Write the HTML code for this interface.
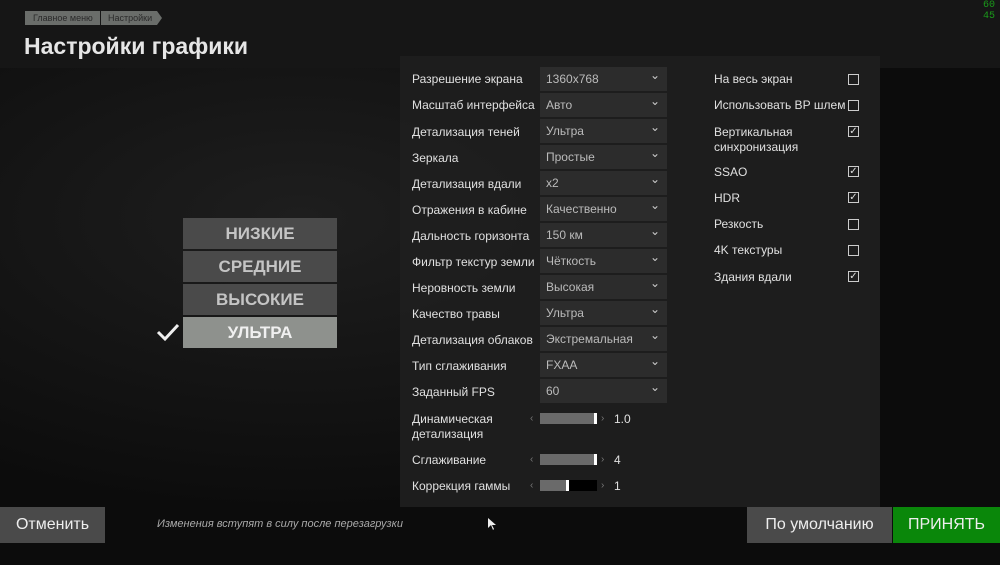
<!DOCTYPE html>
<html><head><meta charset="utf-8"><style>
*{margin:0;padding:0;box-sizing:border-box}
body{width:1000px;height:565px;overflow:hidden;background:#0c0c0c;font-family:"Liberation Sans","DejaVu Sans",sans-serif;color:#ddd;position:relative}
.abs{position:absolute}
.hdr{left:0;top:0;width:1000px;height:68px;background:#161616}
.bg{left:0;top:68px;width:1000px;height:497px;background:radial-gradient(ellipse at 300px 150px,#1e1e1e,#0c0c0c 60%),#0c0c0c}
.crumb{top:11px;height:14px;background:#6a6d6a;color:#2a2a2a;font-size:9px;line-height:14px;padding-left:8px}
.title{left:24px;top:33px;font-size:23px;font-weight:bold;color:#e6e6e6}
.panel{left:400px;top:56px;width:480px;height:451px;background:rgba(30,30,30,.96)}
.lbl{font-size:12px;color:#e0e0e0;left:412px}
.dd{left:540px;width:127px;height:24px;background:#2c2c2c;font-size:12px;color:#bbb;line-height:24px;padding-left:6px}
.dd::after{content:"⌄";position:absolute;right:7px;top:-4px;font-size:12px;color:#ccc}
.rl{left:714px;font-size:12px;color:#e0e0e0;line-height:15px}
.cb{left:848px;width:11px;height:11px;border:1px solid #ccc;font-size:10px;line-height:9px;text-align:center;color:#ddd}
.pr{left:183px;width:154px;height:31px;background:#4a4a4a;color:#c4c4c4;font-weight:bold;font-size:17px;text-align:center;line-height:31px}
.sl{left:540px;width:57px;height:11px;background:#000}
.sl i{position:absolute;left:0;top:0;height:11px;background:#6a6a6a;border-right:3px solid #fff}
.ar{font-size:10px;color:#777}
.btn{height:36px;top:507px;font-size:16px;color:#eee;text-align:center;line-height:36px}
</style></head><body>
<div class="abs hdr"></div>
<div class="abs bg"></div>
<div class="abs crumb" style="left:25px;width:75px">Главное меню</div>
<div class="abs crumb" style="left:101px;width:56px;padding-left:7px">Настройки</div>
<div class="abs" style="left:157px;top:11px;width:0;height:0;border-top:7px solid transparent;border-bottom:7px solid transparent;border-left:5px solid #6a6d6a"></div>
<div class="abs title">Настройки графики</div>
<div class="abs" style="left:983px;top:0;color:#1a9a1a;font-size:10px;line-height:11px;font-family:'Liberation Mono',monospace">60<br>45</div>
<div class="abs panel"></div>

<div class="abs lbl" style="top:72px">Разрешение экрана</div><div class="abs dd" style="top:67px">1360x768</div>
<div class="abs lbl" style="top:98px">Масштаб интерфейса</div><div class="abs dd" style="top:93px">Авто</div>
<div class="abs lbl" style="top:125px">Детализация теней</div><div class="abs dd" style="top:119px">Ультра</div>
<div class="abs lbl" style="top:151px">Зеркала</div><div class="abs dd" style="top:145px">Простые</div>
<div class="abs lbl" style="top:177px">Детализация вдали</div><div class="abs dd" style="top:171px">x2</div>
<div class="abs lbl" style="top:203px">Отражения в кабине</div><div class="abs dd" style="top:197px">Качественно</div>
<div class="abs lbl" style="top:229px">Дальность горизонта</div><div class="abs dd" style="top:223px">150 км</div>
<div class="abs lbl" style="top:255px">Фильтр текстур земли</div><div class="abs dd" style="top:249px">Чёткость</div>
<div class="abs lbl" style="top:281px">Неровность земли</div><div class="abs dd" style="top:275px">Высокая</div>
<div class="abs lbl" style="top:307px">Качество травы</div><div class="abs dd" style="top:301px">Ультра</div>
<div class="abs lbl" style="top:333px">Детализация облаков</div><div class="abs dd" style="top:327px">Экстремальная</div>
<div class="abs lbl" style="top:359px">Тип сглаживания</div><div class="abs dd" style="top:353px">FXAA</div>
<div class="abs lbl" style="top:385px">Заданный FPS</div><div class="abs dd" style="top:379px">60</div>

<div class="abs lbl" style="top:412px;line-height:15px">Динамическая<br>детализация</div>
<div class="abs ar" style="left:530px;top:413px">‹</div><div class="abs sl" style="top:413px"><i style="width:57px"></i></div><div class="abs ar" style="left:601px;top:413px">›</div><div class="abs lbl" style="left:614px;top:412px">1.0</div>
<div class="abs lbl" style="top:453px">Сглаживание</div>
<div class="abs ar" style="left:530px;top:454px">‹</div><div class="abs sl" style="top:454px"><i style="width:57px"></i></div><div class="abs ar" style="left:601px;top:454px">›</div><div class="abs lbl" style="left:614px;top:453px">4</div>
<div class="abs lbl" style="top:479px">Коррекция гаммы</div>
<div class="abs ar" style="left:530px;top:480px">‹</div><div class="abs sl" style="top:480px"><i style="width:29px"></i></div><div class="abs ar" style="left:601px;top:480px">›</div><div class="abs lbl" style="left:614px;top:479px">1</div>

<div class="abs rl" style="top:72px">На весь экран</div><div class="abs cb" style="top:74px"></div>
<div class="abs rl" style="top:98px">Использовать ВР шлем</div><div class="abs cb" style="top:100px"></div>
<div class="abs rl" style="top:125px">Вертикальная<br>синхронизация</div><div class="abs cb" style="top:126px">✓</div>
<div class="abs rl" style="top:165px">SSAO</div><div class="abs cb" style="top:166px">✓</div>
<div class="abs rl" style="top:191px">HDR</div><div class="abs cb" style="top:192px">✓</div>
<div class="abs rl" style="top:217px">Резкость</div><div class="abs cb" style="top:219px"></div>
<div class="abs rl" style="top:243px">4K текстуры</div><div class="abs cb" style="top:245px"></div>
<div class="abs rl" style="top:270px">Здания вдали</div><div class="abs cb" style="top:271px">✓</div>

<div class="abs pr" style="top:218px">НИЗКИЕ</div>
<div class="abs pr" style="top:251px">СРЕДНИЕ</div>
<div class="abs pr" style="top:284px">ВЫСОКИЕ</div>
<div class="abs pr" style="top:317px;background:#8e918d;color:#f0f0f0">УЛЬТРА</div>
<svg class="abs" style="left:156px;top:322px" width="24" height="20"><path d="M2 10 L9 17 L22 3" stroke="#eee" stroke-width="3" fill="none"/></svg>

<div class="abs btn" style="left:0;width:105px;background:#4a4a4a">Отменить</div>
<div class="abs" style="left:157px;top:518px;font-size:11px;font-style:italic;color:#aaa">Изменения вступят в силу после перезагрузки</div>
<svg class="abs" style="left:487px;top:517px" width="10" height="14"><path d="M1 1 L1 11 L4 8 L6 13 L7 12 L5 8 L9 8 Z" fill="#eee"/></svg>
<div class="abs btn" style="left:747px;width:145px;background:#4a4a4a">По умолчанию</div>
<div class="abs btn" style="left:893px;width:107px;background:#0a870a">ПРИНЯТЬ</div>
</body></html>
